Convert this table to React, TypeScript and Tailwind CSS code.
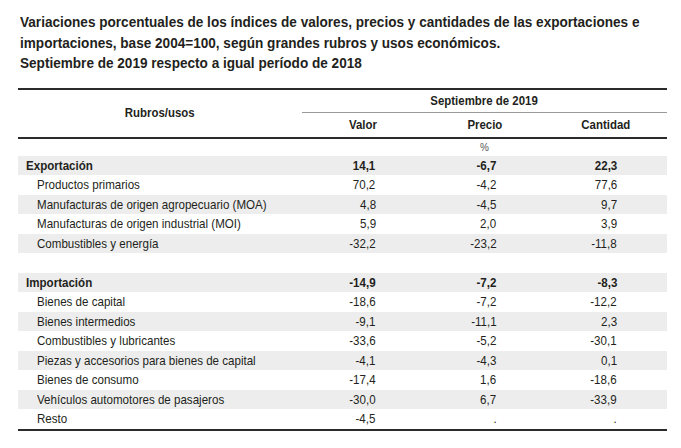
import React from 'react';

type Row = {
  label: string;
  valor?: string;
  precio?: string;
  cantidad?: string;
  kind: 'section' | 'item' | 'blank';
};

const rows: Row[] = [
  { label: 'Exportación', valor: '14,1', precio: '-6,7', cantidad: '22,3', kind: 'section' },
  { label: 'Productos primarios', valor: '70,2', precio: '-4,2', cantidad: '77,6', kind: 'item' },
  { label: 'Manufacturas de origen agropecuario (MOA)', valor: '4,8', precio: '-4,5', cantidad: '9,7', kind: 'item' },
  { label: 'Manufacturas de origen industrial (MOI)', valor: '5,9', precio: '2,0', cantidad: '3,9', kind: 'item' },
  { label: 'Combustibles y energía', valor: '-32,2', precio: '-23,2', cantidad: '-11,8', kind: 'item' },
  { label: '', kind: 'blank' },
  { label: 'Importación', valor: '-14,9', precio: '-7,2', cantidad: '-8,3', kind: 'section' },
  { label: 'Bienes de capital', valor: '-18,6', precio: '-7,2', cantidad: '-12,2', kind: 'item' },
  { label: 'Bienes intermedios', valor: '-9,1', precio: '-11,1', cantidad: '2,3', kind: 'item' },
  { label: 'Combustibles y lubricantes', valor: '-33,6', precio: '-5,2', cantidad: '-30,1', kind: 'item' },
  { label: 'Piezas y accesorios para bienes de capital', valor: '-4,1', precio: '-4,3', cantidad: '0,1', kind: 'item' },
  { label: 'Bienes de consumo', valor: '-17,4', precio: '1,6', cantidad: '-18,6', kind: 'item' },
  { label: 'Vehículos automotores de pasajeros', valor: '-30,0', precio: '6,7', cantidad: '-33,9', kind: 'item' },
  { label: 'Resto', valor: '-4,5', precio: '.', cantidad: '.', kind: 'item' },
];

const font = { fontFamily: '"Liberation Sans", Arial, sans-serif' };

// condensed look: Liberation Sans squeezed horizontally
const L = ({ children }: { children: React.ReactNode }) => (
  <span className="inline-block whitespace-nowrap origin-left scale-x-[0.89]">{children}</span>
);
const R = ({ children }: { children: React.ReactNode }) => (
  <span className="inline-block whitespace-nowrap origin-right scale-x-[0.89]">{children}</span>
);
const C = ({ children }: { children: React.ReactNode }) => (
  <span className="inline-block whitespace-nowrap origin-center scale-x-[0.88]">{children}</span>
);
const T = ({ children }: { children: React.ReactNode }) => (
  <div className="h-[20.5px]">
    <span className="inline-block whitespace-nowrap origin-left scale-x-[0.905]">{children}</span>
  </div>
);

export default function App() {
  return (
    <div className="w-[681px] h-[448px] bg-white text-[#231f20] overflow-hidden" style={font}>
      {/* Title */}
      <div className="pl-[20px] pt-[12px] text-[15px] leading-[20.5px] font-bold">
        <T>Variaciones porcentuales de los índices de valores, precios y cantidades de las exportaciones e</T>
        <T>importaciones, base 2004=100, según grandes rubros y usos económicos.</T>
        <T>Septiembre de 2019 respecto a igual período de 2018</T>
      </div>

      {/* Table */}
      <div className="ml-[18px] w-[649px] mt-[14px] text-[13px]">
        {/* Header */}
        <div className="border-t-2 border-[#2b2b2b] grid grid-cols-[284px_1fr_1fr_1fr] font-bold">
          <div className="row-span-2 flex items-center justify-center">
            <C>Rubros/usos</C>
          </div>
          <div className="col-span-3 h-[23px] flex items-center justify-center border-b border-[#9a9a9a]">
            <C>Septiembre de 2019</C>
          </div>
          <div className="h-[24px] flex items-center justify-center">
            <C>Valor</C>
          </div>
          <div className="h-[24px] flex items-center justify-center">
            <C>Precio</C>
          </div>
          <div className="h-[24px] flex items-center justify-center">
            <C>Cantidad</C>
          </div>
        </div>
        <div className="border-t-2 border-[#2b2b2b] grid grid-cols-[284px_1fr_1fr_1fr] h-[19px] text-[10px] text-[#555]">
          <div />
          <div />
          <div className="flex items-center justify-center">%</div>
          <div />
        </div>

        {/* Body */}
        <div className="border-b-2 border-[#2b2b2b]">
          {rows.map((r, i) => (
            <div
              key={i}
              className={`grid grid-cols-[284px_1fr_1fr_1fr] h-[19.5px] items-center ${
                i % 2 === 0 && r.kind !== 'blank' ? 'bg-[#ededed]' : ''
              } ${r.kind === 'section' ? 'font-bold' : ''}`}
            >
              <div className={r.kind === 'section' ? 'pl-[8px]' : 'pl-[19px]'}>
                {r.label && <L>{r.label}</L>}
              </div>
              <div className="text-right pr-[48px]">{r.valor && <R>{r.valor}</R>}</div>
              <div className="text-right pr-[49px]">{r.precio && <R>{r.precio}</R>}</div>
              <div className="text-right pr-[50px]">{r.cantidad && <R>{r.cantidad}</R>}</div>
            </div>
          ))}
        </div>
      </div>
    </div>
  );
}
